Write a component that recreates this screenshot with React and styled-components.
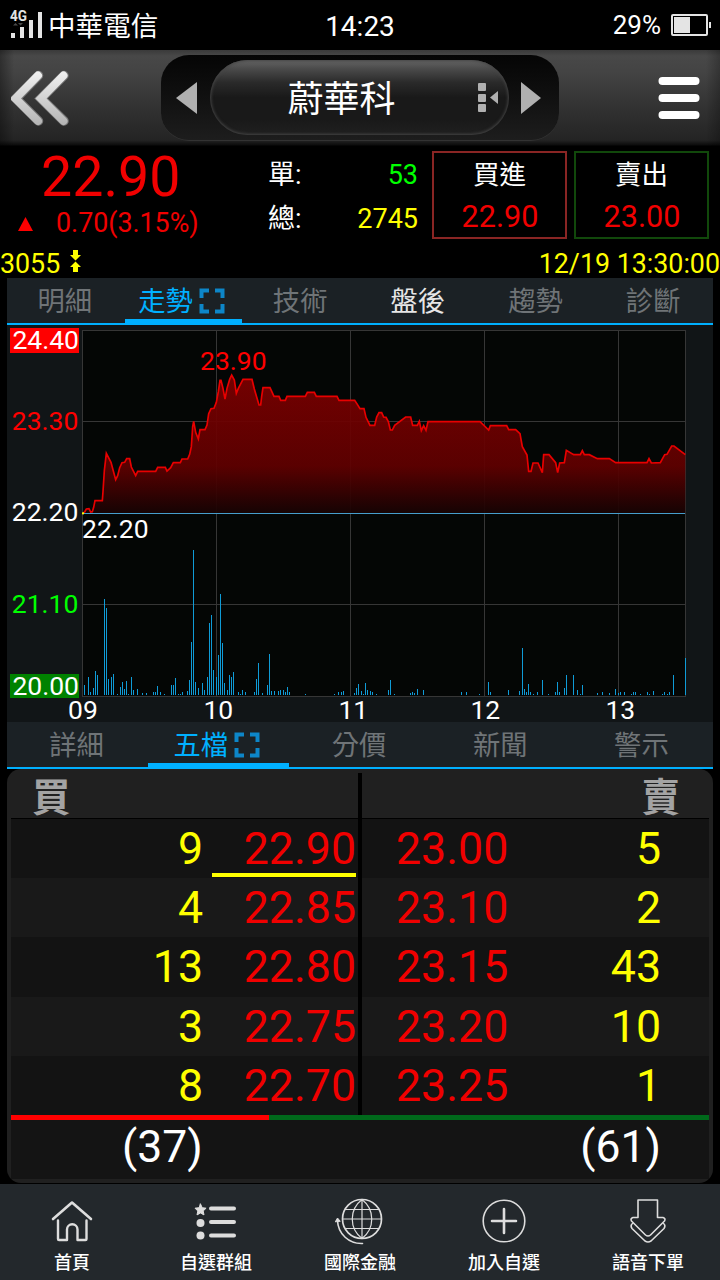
import styled, { createGlobalStyle } from "styled-components";

const GlobalStyle = createGlobalStyle`
  * {
    box-sizing: border-box;
  }
  body {
    margin: 0;
    background: #000;
    font-family: Roboto, "Noto Sans CJK TC", sans-serif;
    color: #fff;
  }
`;

const Screen = styled.div`
  width: 720px;
  height: 1280px;
  display: flex;
  flex-direction: column;
  overflow: hidden;
  white-space: nowrap;
`;

/* status bar */
const StatusBar = styled.div`
  height: 50px;
  display: grid;
  grid-template-columns: 1fr auto 1fr;
  grid-template-rows: 50px;
  padding: 0 10px;
`;
const Carrier = styled.div`
  display: flex;
  align-items: flex-start;
  gap: 5px;
  font-size: 27.6px;
  line-height: 53px;
  & svg {
    margin-top: 9px;
  }
`;
const Time = styled.div`
  font-size: 28px;
  line-height: 54px;
  height: 50px;
`;
const Battery = styled.div`
  display: flex;
  align-items: center;
  justify-content: flex-end;
  gap: 10px;
  margin-right: -1px;
  font-size: 26px;
  line-height: 48px;
`;

/* title bar */
const Header = styled.div`
  height: 96px;
  display: flex;
  align-items: center;
  justify-content: space-between;
  padding: 0 20px 0 11px;
  background:
    linear-gradient(90deg, rgba(0, 0, 0, 0.35), transparent 14px, transparent 706px, rgba(0, 0, 0, 0.25)),
    linear-gradient(#3a3a3a, #484848 6px, #434343 25%, #343434 55%, #242424 90px, #0c0c0c 95px, #000);
`;
const Switcher = styled.div`
  width: 398px;
  height: 86px;
  margin-right: 10px;
  display: flex;
  align-items: center;
  justify-content: space-between;
  padding: 0 17px 0 15px;
  border-radius: 28px;
  background: linear-gradient(#050505, #0e0e0e 40%, #1d1d1d);
  border-bottom: 1px solid #333;
`;
const StockPill = styled.div`
  width: 299px;
  height: 75px;
  display: flex;
  align-items: center;
  justify-content: flex-end;
  gap: 82px;
  padding: 0 10px 0 0;
  border-radius: 38px;
  background: linear-gradient(#656565, #4a4a4a 12%, #2a2a2a 30%, #191919 50%, #191919 80%, #202020);
  box-shadow: inset 0 0 3px 1px #454545;
  font-size: 36px;
`;
const StockName = styled.span`
  height: 75px;
  line-height: 80px;
`;

/* quote */
const Quote = styled.div`
  height: 102px;
  display: flex;
`;
const Last = styled.div`
  width: 268px;
  color: #f00000;
`;
const LastPrice = styled.div`
  height: 60px;
  padding-left: 41px;
  font-size: 55.5px;
  line-height: 64px;
`;
const Change = styled.div`
  display: flex;
  align-items: center;
  gap: 23px;
  padding-left: 18px;
  font-size: 26.8px;
  line-height: 35px;
`;
const Counts = styled.div`
  width: 150px;
  padding-top: 7px;
`;
const Count = styled.div`
  display: flex;
  justify-content: space-between;
  height: 44px;
  line-height: 44px;
  font-size: 27px;
  & span {
    color: ${(p) => p.$color};
  }
`;
const OrderBox = styled.div`
  width: 135px;
  height: 88px;
  margin: 5px 0 0 ${(p) => p.$gap}px;
  border: 2px solid ${(p) => p.$color};
  text-align: center;
  font-size: 26.5px;
  line-height: 44px;
  & div {
    padding-left: 1px;
    font-size: 30.6px;
    line-height: 39px;
    color: #f00000;
  }
`;
const CodeRow = styled.div`
  height: 30px;
  display: flex;
  align-items: flex-start;
  color: #ff0;
  font-size: 26.8px;
  line-height: 33px;
  & svg {
    margin: 2px 0 0 9.5px;
  }
`;
const DateTime = styled.span`
  margin-left: auto;
`;

/* tabs */
const Tabs = styled.div`
  height: 47px;
  margin: 0 7px;
  display: grid;
  grid-auto-flow: column;
  grid-auto-columns: minmax(0, 1fr);
  background: #1b2125;
  border-bottom: 2px solid #00b0ff;
`;
const Tab = styled.div`
  display: flex;
  align-items: flex-start;
  justify-content: center;
  gap: 6px;
  height: 45px;
  padding-right: ${(p) => (p.$active ? 4 : 2)}px;
  line-height: 49px;
  font-size: 27.3px;
  color: ${(p) => (p.$active ? "#00b0ff" : p.$light ? "#e6e6e6" : "#6f7477")};
  border-bottom: 4px solid ${(p) => (p.$active ? "#00b0ff" : "transparent")};
  & svg {
    margin-top: 9.5px;
  }
`;
const ChartArea = styled.div`
  height: 397px;
  margin: 0 7px;
  background: #111517;
  & svg {
    display: block;
    overflow: visible;
  }
`;

/* five best bids and asks */
const Book = styled.div`
  height: 414px;
  margin: 0 7px 1px;
  padding: 4px;
  border-radius: 14px;
  background: #202020;
`;
const Sides = styled.div`
  display: flex;
  gap: 4px;
  height: 342px;
  background: #000;
`;
const Side = styled.div`
  flex: 1;
  display: flex;
  flex-direction: column;
`;
const SideTitle = styled.div`
  height: 45px;
  padding: 0 ${(p) => (p.$right ? 29 : 21)}px;
  margin-bottom: 1px;
  background: #202020;
  color: #a3a3a3;
  font-size: 38.5px;
  font-weight: 700;
  line-height: 49px;
  text-align: ${(p) => (p.$right ? "right" : "left")};
`;
const Level = styled.div`
  display: grid;
  grid-template-columns: ${(p) => (p.$ask ? "179px 1fr" : "1fr 146px")};
  flex: 1;
  line-height: 60px;
  max-height: 59.2px;
  font-size: 44.7px;
  text-align: right;
  background: ${(p) => (p.$odd ? "#191919" : "#131313")};
  padding: 0 ${(p) => (p.$ask ? 48 : 0)}px 0 ${(p) => (p.$ask ? 34 : 0)}px;
`;
const Volume = styled.div`
  height: 58px;
  color: #ff0;
  padding-right: ${(p) => (p.$ask ? 0 : 9)}px;
`;
const Price = styled.div`
  height: 58px;
  color: #f00000;
  text-align: ${(p) => (p.$ask ? "left" : "right")};
  margin-right: 2px;
  border-bottom: ${(p) => (p.$best ? "4px solid #ff0" : "0")};
`;
const Ratio = styled.div`
  height: 5px;
  background: linear-gradient(90deg, #f00 258px, #00691b 258px);
`;
const Totals = styled.div`
  height: 59px;
  display: flex;
  justify-content: space-between;
  padding: 0 48px 0 111px;
  background: #141414;
  font-size: 44.5px;
  line-height: 55px;
`;

/* bottom navigation */
const Nav = styled.div`
  height: 96px;
  display: flex;
  background: #23282c;
`;
const NavItem = styled.div`
  flex: 1;
  display: flex;
  flex-direction: column;
  align-items: center;
  padding-top: 13px;
  font-size: 18px;
  font-weight: 500;
  line-height: 24px;
  color: #fff;
  & svg {
    margin-bottom: 6px;
  }
`;

const PRICES =
  "250,564 254,561 259,552 267,551 272,561 277,560 281,547 285,527 307,527 309,500 313,437 319,385 333,412 341,442 347,464 353,452 359,428 366,413 374,412 380,401 389,401 394,426 401,440 407,452 413,439 467,439 473,427 496,427 501,438 512,428 520,413 541,413 546,402 563,402 569,388 574,365 578,305 581,289 587,322 595,342 600,314 615,314 621,300 626,266 633,251 642,250 649,232 655,200 660,166 663,166 669,190 675,222 681,190 689,163 695,150 703,165 709,205 715,190 729,163 756,163 763,192 777,240 782,240 785,214 789,188 810,188 822,214 837,214 842,226 856,226 861,214 916,214 922,202 943,202 949,214 1011,214 1017,226 1064,226 1072,238 1080,251 1092,251 1098,277 1110,301 1124,301 1130,276 1137,263 1145,263 1151,276 1158,277 1165,290 1171,315 1177,315 1184,301 1217,276 1232,276 1238,301 1252,301 1258,289 1264,317 1271,302 1278,316 1284,290 1440,290 1466,315 1471,302 1520,302 1526,314 1547,314 1560,326 1567,365 1581,390 1586,439 1593,439 1599,414 1614,414 1627,443 1631,389 1647,389 1667,413 1673,443 1679,414 1693,413 1699,376 1721,389 1741,389 1747,377 1753,389 1768,389 1792,401 1828,401 1847,413 1941,413 1947,401 1954,414 1981,413 1994,389 2001,388 2015,363 2022,363 2056,389";

// [x, height]
const VOLUMES = [
  [253, 30], [265, 54], [271, 9], [280, 21], [286, 72], [292, 60], [313, 288], [319, 261], [325, 48], [334, 54],
  [340, 63], [352, 3], [361, 24], [367, 39], [373, 18], [379, 42], [385, 3], [394, 54], [400, 15], [412, 18],
  [427, 6], [439, 6], [460, 9], [466, 9], [472, 27], [481, 9], [493, 3], [514, 30], [520, 30], [526, 51],
  [535, 3], [541, 3], [547, 9], [562, 12], [568, 45], [574, 159], [580, 435], [586, 39], [595, 21], [607, 36],
  [613, 15], [622, 54], [628, 216], [634, 240], [640, 75], [649, 54], [655, 120], [661, 303], [667, 156], [673, 36],
  [682, 15], [688, 60], [694, 54], [700, 69], [715, 9], [721, 3], [727, 15], [736, 9], [763, 9], [769, 48],
  [775, 96], [787, 6], [802, 30], [808, 123], [814, 12], [823, 12], [835, 12], [841, 15], [850, 15], [856, 9],
  [862, 24], [868, 9], [916, 3], [1003, 3], [1015, 9], [1024, 9], [1030, 12], [1063, 6], [1069, 21], [1075, 33],
  [1084, 12], [1090, 3], [1096, 36], [1102, 15], [1111, 12], [1117, 9], [1129, 3], [1165, 15], [1171, 45], [1183, 3],
  [1231, 6], [1237, 9], [1243, 6], [1252, 18], [1270, 15], [1384, 9], [1399, 9], [1438, 3], [1465, 39], [1471, 9],
  [1525, 15], [1558, 12], [1567, 141], [1573, 18], [1579, 9], [1585, 33], [1591, 9], [1600, 3], [1612, 9], [1627, 45],
  [1645, 3], [1666, 9], [1672, 39], [1678, 9], [1693, 21], [1699, 60], [1720, 60], [1732, 15], [1741, 3], [1747, 30],
  [1792, 6], [1807, 9], [1828, 6], [1846, 18], [1855, 6], [1861, 9], [1873, 9], [1894, 3], [1900, 9], [1906, 9],
  [1921, 3], [1942, 9], [1948, 3], [1960, 12], [1987, 3], [1993, 9], [2002, 3], [2008, 9], [2020, 60], [2056, 111],
];

const HOURS = [
  ["09", 249],
  ["10", 655],
  ["11", 1060],
  ["12", 1456],
  ["13", 1861],
];

const LEVELS = [
  ["9", "22.90", "23.00", "5"],
  ["4", "22.85", "23.10", "2"],
  ["13", "22.80", "23.15", "43"],
  ["3", "22.75", "23.20", "10"],
  ["8", "22.70", "23.25", "1"],
];

function Chart() {
  return (
    <svg width="706" height="397" viewBox="21 0 2118 1191" fontSize="79.5" fill="#fff">
      <defs>
        <linearGradient id="area" gradientUnits="userSpaceOnUse" x1="0" x2="0" y1="150" y2="564">
          <stop offset="0" stopColor="#7c0000" stopOpacity="0.93" />
          <stop offset="0.66" stopColor="#600000" stopOpacity="0.93" />
          <stop offset="1" stopColor="#170303" stopOpacity="0.93" />
        </linearGradient>
      </defs>
      <rect x="246" y="15" width="1812" height="1101" fill="#040605" />
      <g stroke="#363636" strokeWidth="3" shapeRendering="crispEdges">
        {[16.5, 289.5, 838.5, 1114.5].map((y) => (
          <line key={y} x1="246" x2="2058" y1={y} y2={y} />
        ))}
        {[247.5, 649.5, 1051.5, 1453.5, 1855.5, 2056.5].map((x) => (
          <line key={x} x1={x} x2={x} y1="15" y2="1116" />
        ))}
      </g>
      <polygon points={`250,564 ${PRICES} 2056,564`} fill="url(#area)" />
      <polyline points={PRICES} fill="none" stroke="#e80000" strokeWidth="5" />
      <rect x="252" y="564" width="1803" height="3" fill="#469dcc" />
      <rect x="246" y="562" width="6" height="6" fill="#ff0" />
      <g fill="#0f9bd7" shapeRendering="crispEdges">
        {VOLUMES.map(([x, h]) => (
          <rect key={x} x={Math.floor(x / 3) * 3} y={1110 - h} width="3" height={h} />
        ))}
      </g>
      <rect x="30" y="9" width="207" height="75" fill="#f00" />
      <rect x="30" y="1047" width="207" height="72" fill="#008200" />
      <g textAnchor="end">
        <text x="237" y="73">24.40</text>
        <text x="235" y="316" fill="#f00">23.30</text>
        <text x="235" y="589">22.20</text>
        <text x="235" y="865" fill="#0f0">21.10</text>
        <text x="237" y="1111">20.00</text>
      </g>
      <text x="600" y="136" fill="#f00">23.90</text>
      <text x="246" y="640">22.20</text>
      <g textAnchor="middle">
        {HOURS.map(([hour, x]) => (
          <text key={hour} x={x} y="1183">{hour}</text>
        ))}
      </g>
    </svg>
  );
}

function ExpandIcon() {
  return (
    <svg width="26" height="26" viewBox="0 0 26 26" fill="none" stroke="#0d86c8" strokeWidth="4">
      <path d="M2.500 10V2.500H10M16 2.500h7.500V10M23.500 16v7.500H16M10 23.500H2.500V16" />
    </svg>
  );
}

function TabBar({ items, active, light }) {
  return (
    <Tabs>
      {items.map((item) => (
        <Tab key={item} $active={item === active} $light={item === light}>
          {item}
          {item === active && <ExpandIcon />}
        </Tab>
      ))}
    </Tabs>
  );
}

function SignalIcon() {
  return (
    <svg width="33" height="32" viewBox="0 0 33 32" fill="#e4e4e4" overflow="visible">
      <text x="0" y="11.500" fontSize="14" fontWeight="700" textLength="17" lengthAdjust="spacingAndGlyphs">4G</text>
      <path d="M3 16.500 5.500 14 8 16.500ZM8 14h5l-2.500 2.500Z" fill="#4a4a4a" />
      <path d="M1 24h4v5H1zM10 18h4v11h-4zM19 11h4v18h-4zM28 3h4v26h-4z" />
    </svg>
  );
}

function BatteryIcon() {
  return (
    <svg width="40" height="22" viewBox="0 0 40 22">
      <rect x="1" y="1" width="35" height="20" rx="1" fill="none" stroke="#e4e4e4" strokeWidth="2" />
      <path d="M3 3h16v16H3zM38 8h2v6h-2z" fill="#e4e4e4" />
    </svg>
  );
}

function BackIcon() {
  return (
    <svg width="60" height="58" viewBox="0 0 60 58">
      <defs>
        <linearGradient id="back" gradientUnits="userSpaceOnUse" x1="0" x2="0" y1="4" y2="56">
          <stop offset="0" stopColor="#efefef" />
          <stop offset="1" stopColor="#b4b4b4" />
        </linearGradient>
      </defs>
      <path d="M27.500 6.500 5 29.500 27.500 52M53 6.500 30 29.500 53 52" fill="none" stroke="#777" strokeWidth="9.500" strokeLinecap="round" />
      <path d="M27 6.500 4.500 29.500 27 52M52.500 6.500 30 29.500 52.500 52" fill="none" stroke="url(#back)" strokeWidth="8" strokeLinecap="round" />
    </svg>
  );
}

function MenuIcon() {
  return (
    <svg width="42" height="44" viewBox="0 0 42 44" stroke="#fff" strokeWidth="8" strokeLinecap="round">
      <path d="M4.500 5h33M4.500 22h33M4.500 39h33" />
    </svg>
  );
}

const NAV = [
  {
    label: "首頁",
    icon: (
      <>
        <path d="M5 22 24 5.500 43 22" strokeWidth="2.600" />
        <path d="M10 23.500v18.500q0 1 1 1h8V32.500a5 5 0 0 1 10.500 0v10.500h8q1 0 1-1V23.500" strokeWidth="2.400" />
      </>
    ),
  },
  {
    label: "自選群組",
    icon: (
      <>
        <path d="m8.500 7 1.700 3.700 3.900.5-2.900 2.800.8 3.900-3.500-1.900L5 17.900l.8-3.900L3 11.200l3.900-.5z" fill="#ddd" strokeWidth="1" />
        <circle cx="8.500" cy="26" r="4" fill="#ddd" stroke="none" />
        <circle cx="8.500" cy="38.500" r="4" fill="#ddd" stroke="none" />
        <path d="M19 11.500h23M19 25h23M19 38.500h23" strokeWidth="4" />
      </>
    ),
  },
  {
    label: "國際金融",
    icon: (
      <>
        <circle cx="26" cy="22" r="19.500" strokeWidth="1.700" />
        <path d="M26 2.500v39M6.500 22h39M9.500 12.500h33M9.500 31.500h33M26 2.500c-13 10-13 29 0 39M26 2.500c13 10 13 29 0 39" strokeWidth="1.200" />
        <path d="M1.500 23.500C2 37 13 47 26.500 46.500" strokeWidth="1.600" />
        <path d="M-.500 24.500 1.500 21l2.500 3z" fill="#ddd" strokeWidth="1" />
      </>
    ),
  },
  {
    label: "加入自選",
    icon: (
      <>
        <circle cx="24" cy="24" r="20.800" strokeWidth="1.600" />
        <path d="M24 12v24M12 24h24" strokeWidth="2.600" />
      </>
    ),
  },
  {
    label: "語音下單",
    icon: (
      <>
        <path d="M14 3h19.500V20.500h5.500q3 1 1.500 3.500L26.500 38q-2.500 2-5 0L7.500 24q-1.500-2.500 1.500-3.500h5z" strokeWidth="1.600" />
        <path d="M8.500 26.500q-2.500 2-.5 5L21 44q3 2 6 0l13-12.500q2-3-.5-5" strokeWidth="1.600" />
      </>
    ),
  },
];

function App() {
  return (
    <Screen>
      <GlobalStyle />
      <StatusBar>
        <Carrier>
          <SignalIcon />
          中華電信
        </Carrier>
        <Time>14:23</Time>
        <Battery>
          29%
          <BatteryIcon />
        </Battery>
      </StatusBar>
      <Header>
        <BackIcon />
        <Switcher>
          <svg width="22" height="34" viewBox="0 0 22 34">
            <path d="M0 17 21 1v32z" fill="#b0b0b0" />
          </svg>
          <StockPill>
            <StockName>蔚華科</StockName>
            <svg width="21" height="30" viewBox="0 0 21 30" fill="#b0b0b0">
              <rect y="0" width="8" height="8" rx="1" />
              <rect y="11" width="8" height="8" rx="1" />
              <rect y="21" width="8" height="8" rx="1" />
              <path d="M12 14.500 20 8v13z" />
            </svg>
          </StockPill>
          <svg width="21" height="34" viewBox="0 0 21 34">
            <path d="M20 17 0 1v32z" fill="#b0b0b0" />
          </svg>
        </Switcher>
        <MenuIcon />
      </Header>
      <Quote>
        <Last>
          <LastPrice>22.90</LastPrice>
          <Change>
            <svg width="15" height="14" viewBox="0 0 15 14">
              <path d="M7.500 0 15 14H0z" fill="#f00" />
            </svg>
            0.70(3.15%)
          </Change>
        </Last>
        <Counts>
          <Count $color="#0f0">
            單:<span>53</span>
          </Count>
          <Count $color="#ff0">
            總:<span>2745</span>
          </Count>
        </Counts>
        <OrderBox $color="#8a2524" $gap={14}>
          買進
          <div>22.90</div>
        </OrderBox>
        <OrderBox $color="#11480b" $gap={7}>
          賣出
          <div>23.00</div>
        </OrderBox>
      </Quote>
      <CodeRow>
        3055
        <svg width="11" height="22" viewBox="0 0 11 22" fill="#ff0">
          <path d="M3 0h5v5h3L5.500 10.500 0 5h3zM3 22h5v-5h3l-5.500-5.500L0 17h3z" />
        </svg>
        <DateTime>12/19 13:30:00</DateTime>
      </CodeRow>
      <TabBar items={["明細", "走勢", "技術", "盤後", "趨勢", "診斷"]} active="走勢" light="盤後" />
      <ChartArea>
        <Chart />
      </ChartArea>
      <TabBar items={["詳細", "五檔", "分價", "新聞", "警示"]} active="五檔" />
      <Book>
        <Sides>
          <Side>
            <SideTitle>買</SideTitle>
            {LEVELS.map(([volume, bid], i) => (
              <Level key={bid} $odd={i % 2}>
                <Volume>{volume}</Volume>
                <Price $best={i === 0}>{bid}</Price>
              </Level>
            ))}
          </Side>
          <Side>
            <SideTitle $right>賣</SideTitle>
            {LEVELS.map(([, , ask, volume], i) => (
              <Level key={ask} $odd={i % 2} $ask>
                <Price $ask>{ask}</Price>
                <Volume $ask>{volume}</Volume>
              </Level>
            ))}
          </Side>
        </Sides>
        <Ratio />
        <Totals>
          <span>(37)</span>
          <span>(61)</span>
        </Totals>
      </Book>
      <Nav>
        {NAV.map(({ label, icon }) => (
          <NavItem key={label}>
            <svg width="48" height="48" viewBox="0 0 48 48" fill="none" stroke="#ddd" strokeLinecap="round" strokeLinejoin="round" overflow="visible">
              {icon}
            </svg>
            {label}
          </NavItem>
        ))}
      </Nav>
    </Screen>
  );
}

export default App;
